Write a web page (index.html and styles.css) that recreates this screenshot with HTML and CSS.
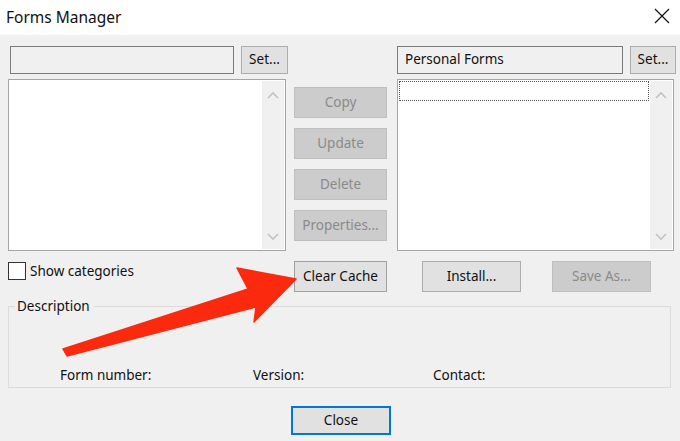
FILE: index.html
```html
<!DOCTYPE html>
<html>
<head>
<meta charset="utf-8">
<link rel="stylesheet" href="styles.css">
</head>
<body>
<div class="window">
  <div class="titlebar">
    <span class="title">Forms Manager</span>
    <svg class="close-x" width="16" height="16" viewBox="0 0 16 16"><path d="M1 1 L15 15 M15 1 L1 15" stroke="#111" stroke-width="1.2" fill="none"/></svg>
  </div>
  <div class="dialog">
    <div class="main">
      <div class="col left">
        <div class="field-row">
          <div class="textfield tf-left"></div>
          <button class="btn set-left">Set...</button>
        </div>
        <div class="listbox lb-left">
          <div class="lb-content"></div>
          <div class="scrollbar">
            <svg width="12" height="8" viewBox="0 0 12 8"><polyline points="1,7 6,2 11,7" stroke="#c2c2c2" stroke-width="1.6" fill="none"/></svg>
            <svg width="12" height="8" viewBox="0 0 12 8"><polyline points="1,1 6,6 11,1" stroke="#c2c2c2" stroke-width="1.6" fill="none"/></svg>
          </div>
        </div>
      </div>
      <div class="col middle">
        <button class="btn disabled">Copy</button>
        <button class="btn disabled">Update</button>
        <button class="btn disabled">Delete</button>
        <button class="btn disabled">Properties...</button>
      </div>
      <div class="col right">
        <div class="field-row">
          <div class="textfield tf-right">Personal Forms</div>
          <button class="btn set-right">Set...</button>
        </div>
        <div class="listbox lb-right">
          <div class="lb-content"><div class="focus-item"></div></div>
          <div class="scrollbar">
            <svg width="12" height="8" viewBox="0 0 12 8"><polyline points="1,7 6,2 11,7" stroke="#c2c2c2" stroke-width="1.6" fill="none"/></svg>
            <svg width="12" height="8" viewBox="0 0 12 8"><polyline points="1,1 6,6 11,1" stroke="#c2c2c2" stroke-width="1.6" fill="none"/></svg>
          </div>
        </div>
      </div>
    </div>
    <div class="actions">
      <label class="check"><span class="box"></span><span>Show categories</span></label>
      <button class="btn clear">Clear Cache</button>
      <div class="right-actions">
        <button class="btn install">Install...</button>
        <button class="btn disabled saveas">Save As...</button>
      </div>
    </div>
    <fieldset class="desc">
      <legend>Description</legend>
      <div class="desc-row">
        <span class="lbl l1">Form number:</span>
        <span class="lbl l2">Version:</span>
        <span class="lbl l3">Contact:</span>
      </div>
    </fieldset>
    <div class="footer">
      <button class="btn close">Close</button>
    </div>
  </div>
  <svg class="arrow" width="680" height="441" viewBox="0 0 680 441">
    <polygon points="296,279 237,268 248,289 63,349 67,356 256,307 254,322" fill="#fb2a0e" stroke="#fb2a0e" stroke-width="1.5" stroke-linejoin="round"/>
  </svg>
</div>
</body>
</html>
```

FILE: styles.css
```css
* { box-sizing: border-box; }
html, body { margin: 0; padding: 0; }
body {
  width: 680px;
  height: 441px;
  overflow: hidden;
  font-family: "Noto Sans", "Open Sans", sans-serif;
  font-size: 13.5px;
  color: #111;
  background: #f0f0f0;
}
.window { position: relative; width: 680px; height: 441px; }
.titlebar {
  height: 35px;
  background: #fff;
  display: flex;
  align-items: center;
  justify-content: space-between;
  padding: 0 10px 2px 6px;
}
.title { font-size: 15.5px; color: #111; }
.close-x { display: block; margin-top: -2px; }
.dialog {
  background: #f0f0f0;
  height: 406px;
  padding: 11px 0 0 8px;
}
.main { display: flex; }
.col.left { width: 280px; display: flex; flex-direction: column; gap: 5px; }
.col.middle { width: 93px; margin-left: 6px; padding-top: 41px; display: flex; flex-direction: column; gap: 10px; }
.col.right { width: 279px; margin-left: 10px; display: flex; flex-direction: column; gap: 5px; }
.field-row { display: flex; justify-content: space-between; height: 28px; }
.textfield {
  height: 28px;
  background: #f0f0f0;
  border: 1px solid #7a7a7a;
  display: flex;
  align-items: center;
  padding-left: 7px;
  line-height: 1;
}
.tf-left { width: 224px; margin-left: 2px; }
.tf-right { width: 226px; }
.btn {
  font-family: inherit;
  font-size: 13.5px;
  color: #111;
  background: #e1e1e1;
  border: 1px solid #adadad;
  padding: 0;
  margin: 0;
  height: 31px;
  line-height: 1;
}
.btn.disabled { background: #cccccc; border-color: #bfbfbf; color: #8a8a8a; }
.set-left { width: 47px; height: 28px; }
.set-right { width: 46px; height: 28px; }
.listbox {
  height: 172px;
  background: #fff;
  border: 1px solid #a6a6a6;
  display: flex;
  padding: 1px 1px 1px 1px;
}
.lb-left { width: 278px; }
.lb-right { width: 277px; }
.lb-content { flex: 1; }
.focus-item { height: 20px; border: 1px dotted #555; margin-right: 1px; }
.scrollbar {
  width: 22px;
  background: #f0f0f0;
  display: flex;
  flex-direction: column;
  justify-content: space-between;
  align-items: center;
  padding: 10px 0 8px;
}
.scrollbar svg { display: block; }
.actions { display: flex; align-items: flex-start; margin-top: 10px; height: 31px; }
.check { width: 286px; display: flex; align-items: center; gap: 4px; margin-top: 1px; height: 18px; }
.box { width: 18px; height: 18px; border: 1px solid #333; background: #fff; display: inline-block; }
.clear { width: 93px; border-color: #a0a0a0; }
.right-actions { display: flex; margin-left: 35px; gap: 31px; }
.install, .saveas { width: 99px; }
.desc {
  margin: 6px 0 0 0;
  width: 663px;
  height: 90px;
  border: 1px solid #dcdcdc;
  padding: 0;
  min-width: 0;
}
.desc legend { padding: 0 4px 0 2px; margin-left: 6px; font-size: 13.5px; line-height: 16px; }
.desc-row { display: flex; padding: 52px 0 0 51px; }
.l1 { width: 193px; }
.l2 { width: 180px; }
.footer { display: flex; padding-left: 283px; margin-top: 18px; }
.close { width: 100px; height: 29px; border: 2px solid #0078d7; }
.arrow { position: absolute; left: 0; top: 0; pointer-events: none; }
```
